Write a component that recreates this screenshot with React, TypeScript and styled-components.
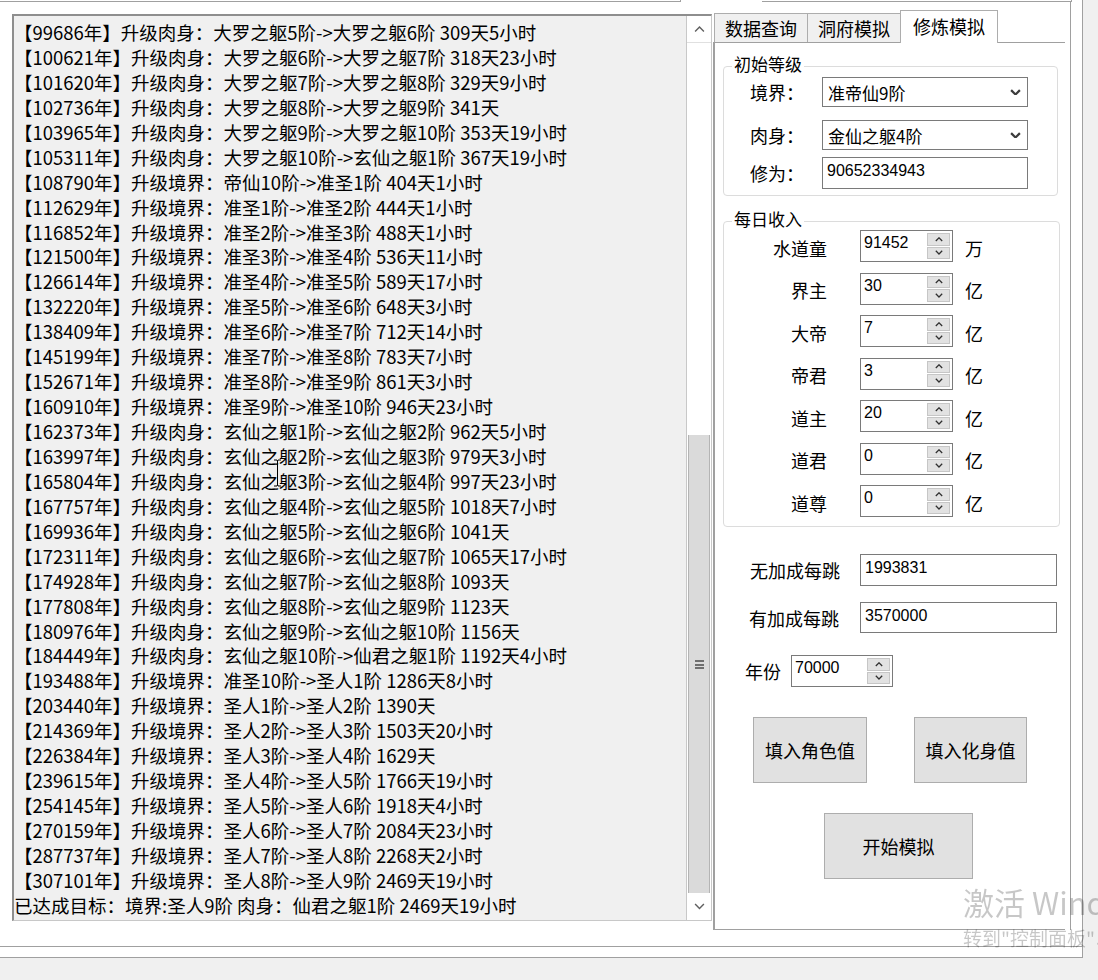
import React from 'react'
import styled, { createGlobalStyle } from 'styled-components'

const Global = createGlobalStyle`
    body {
        margin: 0;
        background: #f0f0f0;
        font-family: "Noto Sans CJK SC", "Noto Sans", sans-serif;
        color: #000;
        overflow: hidden;
    }
    * { box-sizing: border-box; }
`

const Frame = styled.div`
    width: 1083px;
    height: 958px;
    background: #fff;
    border-right: 1px solid #a0a0a0;
    border-bottom: 1px solid #a0a0a0;
`

const Inner = styled.div`
    height: 947px;
    border-bottom: 1px solid #a0a0a0;
`

const TopStrip = styled.div`
    display: flex;
    height: 2px;
`

const Edge = styled.div<{ $w: number; $line?: boolean }>`
    width: ${p => p.$w}px;
    border-bottom: ${p => (p.$line ? '1px solid #a0a0a0' : 'none')};
    border-right: ${p => (p.$line ? '1px solid #a0a0a0' : 'none')};
`

const Body = styled.div`
    display: flex;
    align-items: flex-start;
`

const ListBox = styled.div`
    margin: 12px 0 0 12px;
    width: 700px;
    height: 907px;
    display: flex;
    background: #f0f0f0;
    border-top: 2px solid #8e8e8e;
    border-left: 2px solid #8e8e8e;
    border-right: 1px solid #c8c8c8;
    border-bottom: 1px solid #c8c8c8;
`

const Lines = styled.div`
    flex: 1;
    padding: 4px 0 0 0;
    font-size: 18.5px;
    line-height: 24.94px;
    white-space: nowrap;
    overflow: hidden;
`

const ScrollBar = styled.div`
    width: 25px;
    display: flex;
    flex-direction: column;
    background: #fff;
    border-left: 1px solid #c8c8c8;
`

const ArrowBtn = styled.div<{ $h: number }>`
    height: ${p => p.$h}px;
    display: flex;
    align-items: center;
    justify-content: center;
`

const Track = styled.div`
    height: 393px;
    border-top: 1px solid #e0e0e0;
`

const Thumb = styled.div`
    height: 458px;
    margin: 0 1px;
    background: #dadada;
    border-left: 1px solid #b4b4b4;
    border-right: 1px solid #b4b4b4;
    display: flex;
    align-items: center;
    justify-content: center;
`

const Grip = styled.div`
    width: 9px;
    height: 9px;
    background: linear-gradient(#6e6e6e 0 2px, transparent 2px 4px, #6e6e6e 4px 6px, transparent 6px 7px, #6e6e6e 7px 9px);
`

const TabControl = styled.div`
    margin-left: 1px;
    padding-top: 8px;
    width: 358px;
    border-right: 1px solid #a0a0a0;
`

const TabStrip = styled.div`
    display: flex;
    align-items: flex-end;
    height: 32px;
    padding-left: 2px;
`

const Tab = styled.div<{ $active?: boolean }>`
    height: ${p => (p.$active ? 33 : 29)}px;
    margin-bottom: ${p => (p.$active ? -1 : 0)}px;
    padding: ${p => (p.$active ? '0 12px 3px' : '0 10px')};
    display: flex;
    align-items: center;
    font-size: 18px;
    background: ${p => (p.$active ? '#fff' : '#f0f0f0')};
    border: 1px solid #adadad;
    border-bottom: none;
    margin-left: -1px;
    position: relative;
    z-index: ${p => (p.$active ? 1 : 0)};
`

const Panel = styled.div`
    height: 888px;
    margin-right: 5px;
    background: #fff;
    border-top: 1px solid #a0a0a0;
    border-bottom: 1px solid #a0a0a0;
    border-left: 2px solid #a0a0a0;
    display: flex;
    flex-direction: column;
`

const Group = styled.fieldset<{ $w: number; $mt: number; $pb: number }>`
    margin: ${p => p.$mt}px 0 0 8px;
    width: ${p => p.$w}px;
    padding: 0 0 ${p => p.$pb}px 0;
    border: 1px solid #dcdcdc;
    border-radius: 4px;
    min-width: 0;
`

const Legend = styled.legend`
    margin-left: 8px;
    padding: 0 2px;
    font-size: 17px;
    line-height: 20px;
    position: relative;
    top: -2px;
`

const FieldRow = styled.div<{ $mt: number }>`
    display: flex;
    align-items: center;
    margin-top: ${p => p.$mt}px;
    padding-left: 26px;
`

const FieldLabel = styled.div`
    width: 72px;
    font-size: 18px;
`

const Combo = styled.div`
    width: 206px;
    height: 30px;
    border: 1px solid #7a7a7a;
    display: flex;
    align-items: center;
    justify-content: space-between;
    padding: 0 6px 0 5px;
    font-size: 17px;
`

const TextBox = styled.div<{ $w: number; $h: number }>`
    width: ${p => p.$w}px;
    height: ${p => p.$h}px;
    border: 1px solid #7a7a7a;
    padding: 3px 4px;
    font-family: "Liberation Sans", Arial, sans-serif;
    font-size: 16px;
    line-height: 20px;
`

const IncomeRows = styled.div`
    display: flex;
    flex-direction: column;
    gap: 10.5px;
    margin-top: -1px;
`

const IncomeRow = styled.div`
    display: flex;
    align-items: center;
    height: 32px;
`

const IncomeLabel = styled.div`
    width: 103px;
    margin-right: 33px;
    text-align: right;
    font-size: 18px;
    padding-top: 3px;
`

const Spin = styled.div<{ $w: number }>`
    width: ${p => p.$w}px;
    height: 32px;
    border: 1px solid #7a7a7a;
    display: flex;
`

const SpinText = styled.div`
    flex: 1;
    padding: 2px 3px;
    font-family: "Liberation Sans", Arial, sans-serif;
    font-size: 16px;
    line-height: 20px;
`

const SpinBtns = styled.div`
    width: 23px;
    margin: 2px 2px 2px 0;
    display: flex;
    flex-direction: column;
    gap: 1px;
`

const SpinBtn = styled.div`
    flex: 1;
    background: #e2e2e2;
    border: 1px solid #c6c6c6;
    display: flex;
    align-items: center;
    justify-content: center;
`

const Unit = styled.div`
    margin-left: 12px;
    font-size: 18px;
    padding-top: 3px;
`

const LineRow = styled.div<{ $mt: number; $pl: number }>`
    display: flex;
    align-items: center;
    margin-top: ${p => p.$mt}px;
    padding-left: ${p => p.$pl}px;
`

const LineLabel = styled.div<{ $w: number }>`
    width: ${p => p.$w}px;
    font-size: 18px;
`

const ButtonRow = styled.div<{ $mt: number; $pl: number }>`
    display: flex;
    gap: 47px;
    margin-top: ${p => p.$mt}px;
    padding-left: ${p => p.$pl}px;
`

const Button = styled.div<{ $w: number }>`
    width: ${p => p.$w}px;
    height: 66px;
    background: #e1e1e1;
    border: 1px solid #adadad;
    display: flex;
    align-items: center;
    justify-content: center;
    font-size: 18px;
`

const Watermark = styled.div`
    position: fixed;
    left: 963px;
    top: 882px;
    color: rgba(0, 0, 0, 0.22);
    white-space: nowrap;
    pointer-events: none;
`

const WmBig = styled.div`
    font-size: 31px;
    line-height: 40px;
`

const WmSmall = styled.div`
    font-size: 19px;
    line-height: 26px;
    margin-top: 3px;
`

const Cursor = styled.svg`
    position: fixed;
    left: 273px;
    top: 459px;
    pointer-events: none;
`

const Chevron = ({ up, w = 10, c = '#3c3c3c', sw = 1.6 }: { up?: boolean; w?: number; c?: string; sw?: number }) => (
    <svg width={w} height={w * 0.6} viewBox="0 0 10 6">
        <polyline
            points={up ? '1,5 5,1 9,5' : '1,1 5,5 9,1'}
            fill="none"
            stroke={c}
            strokeWidth={sw}
        />
    </svg>
)

const rows = [
    '【99686年】升级肉身：大罗之躯5阶->大罗之躯6阶 309天5小时',
    '【100621年】升级肉身：大罗之躯6阶->大罗之躯7阶 318天23小时',
    '【101620年】升级肉身：大罗之躯7阶->大罗之躯8阶 329天9小时',
    '【102736年】升级肉身：大罗之躯8阶->大罗之躯9阶 341天',
    '【103965年】升级肉身：大罗之躯9阶->大罗之躯10阶 353天19小时',
    '【105311年】升级肉身：大罗之躯10阶->玄仙之躯1阶 367天19小时',
    '【108790年】升级境界：帝仙10阶->准圣1阶 404天1小时',
    '【112629年】升级境界：准圣1阶->准圣2阶 444天1小时',
    '【116852年】升级境界：准圣2阶->准圣3阶 488天1小时',
    '【121500年】升级境界：准圣3阶->准圣4阶 536天11小时',
    '【126614年】升级境界：准圣4阶->准圣5阶 589天17小时',
    '【132220年】升级境界：准圣5阶->准圣6阶 648天3小时',
    '【138409年】升级境界：准圣6阶->准圣7阶 712天14小时',
    '【145199年】升级境界：准圣7阶->准圣8阶 783天7小时',
    '【152671年】升级境界：准圣8阶->准圣9阶 861天3小时',
    '【160910年】升级境界：准圣9阶->准圣10阶 946天23小时',
    '【162373年】升级肉身：玄仙之躯1阶->玄仙之躯2阶 962天5小时',
    '【163997年】升级肉身：玄仙之躯2阶->玄仙之躯3阶 979天3小时',
    '【165804年】升级肉身：玄仙之躯3阶->玄仙之躯4阶 997天23小时',
    '【167757年】升级肉身：玄仙之躯4阶->玄仙之躯5阶 1018天7小时',
    '【169936年】升级肉身：玄仙之躯5阶->玄仙之躯6阶 1041天',
    '【172311年】升级肉身：玄仙之躯6阶->玄仙之躯7阶 1065天17小时',
    '【174928年】升级肉身：玄仙之躯7阶->玄仙之躯8阶 1093天',
    '【177808年】升级肉身：玄仙之躯8阶->玄仙之躯9阶 1123天',
    '【180976年】升级肉身：玄仙之躯9阶->玄仙之躯10阶 1156天',
    '【184449年】升级肉身：玄仙之躯10阶->仙君之躯1阶 1192天4小时',
    '【193488年】升级境界：准圣10阶->圣人1阶 1286天8小时',
    '【203440年】升级境界：圣人1阶->圣人2阶 1390天',
    '【214369年】升级境界：圣人2阶->圣人3阶 1503天20小时',
    '【226384年】升级境界：圣人3阶->圣人4阶 1629天',
    '【239615年】升级境界：圣人4阶->圣人5阶 1766天19小时',
    '【254145年】升级境界：圣人5阶->圣人6阶 1918天4小时',
    '【270159年】升级境界：圣人6阶->圣人7阶 2084天23小时',
    '【287737年】升级境界：圣人7阶->圣人8阶 2268天2小时',
    '【307101年】升级境界：圣人8阶->圣人9阶 2469天19小时',
    '已达成目标：境界:圣人9阶 肉身：仙君之躯1阶 2469天19小时',
]

const income = [
    { label: '水道童', value: '91452', unit: '万' },
    { label: '界主', value: '30', unit: '亿' },
    { label: '大帝', value: '7', unit: '亿' },
    { label: '帝君', value: '3', unit: '亿' },
    { label: '道主', value: '20', unit: '亿' },
    { label: '道君', value: '0', unit: '亿' },
    { label: '道尊', value: '0', unit: '亿' },
]

const SpinBox = ({ value, w }: { value: string; w: number }) => (
    <Spin $w={w}>
        <SpinText>{value}</SpinText>
        <SpinBtns>
            <SpinBtn><Chevron up w={8} sw={1.6} c="#303030" /></SpinBtn>
            <SpinBtn><Chevron w={8} sw={1.6} c="#303030" /></SpinBtn>
        </SpinBtns>
    </Spin>
)

export default function App() {
    return (
        <>
            <Global />
            <Frame>
                <Inner>
                    <TopStrip>
                        <Edge $w={681} $line />
                        <Edge $w={81} />
                        <Edge $w={310} $line />
                    </TopStrip>
                    <Body>
                        <ListBox>
                            <Lines>
                                {rows.map(r => (
                                    <div key={r}>{r}</div>
                                ))}
                            </Lines>
                            <ScrollBar>
                                <ArrowBtn $h={26}><Chevron up w={11} c="#606060" sw={1.3} /></ArrowBtn>
                                <Track />
                                <Thumb><Grip /></Thumb>
                                <ArrowBtn $h={27}><Chevron w={11} c="#606060" sw={1.3} /></ArrowBtn>
                            </ScrollBar>
                        </ListBox>
                        <TabControl>
                            <TabStrip>
                                <Tab>数据查询</Tab>
                                <Tab>洞府模拟</Tab>
                                <Tab $active>修炼模拟</Tab>
                            </TabStrip>
                            <Panel>
                                <Group $w={335} $mt={13} $pb={6}>
                                    <Legend>初始等级</Legend>
                                    <FieldRow $mt={1}>
                                        <FieldLabel>境界：</FieldLabel>
                                        <Combo>准帝仙9阶<Chevron w={11} sw={2} /></Combo>
                                    </FieldRow>
                                    <FieldRow $mt={13}>
                                        <FieldLabel>肉身：</FieldLabel>
                                        <Combo>金仙之躯4阶<Chevron w={11} sw={2} /></Combo>
                                    </FieldRow>
                                    <FieldRow $mt={7}>
                                        <FieldLabel>修为：</FieldLabel>
                                        <TextBox $w={206} $h={32}>90652334943</TextBox>
                                    </FieldRow>
                                </Group>
                                <Group $w={337} $mt={15} $pb={9}>
                                    <Legend>每日收入</Legend>
                                    <IncomeRows>
                                        {income.map(i => (
                                            <IncomeRow key={i.label}>
                                                <IncomeLabel>{i.label}</IncomeLabel>
                                                <SpinBox value={i.value} w={93} />
                                                <Unit>{i.unit}</Unit>
                                            </IncomeRow>
                                        ))}
                                    </IncomeRows>
                                </Group>
                                <LineRow $mt={27} $pl={35}>
                                    <LineLabel $w={110}>无加成每跳</LineLabel>
                                    <TextBox $w={197} $h={32}>1993831</TextBox>
                                </LineRow>
                                <LineRow $mt={16} $pl={34}>
                                    <LineLabel $w={111}>有加成每跳</LineLabel>
                                    <TextBox $w={197} $h={31}>3570000</TextBox>
                                </LineRow>
                                <LineRow $mt={22} $pl={30}>
                                    <LineLabel $w={46}>年份</LineLabel>
                                    <SpinBox value="70000" w={102} />
                                </LineRow>
                                <ButtonRow $mt={30} $pl={38}>
                                    <Button $w={114}>填入角色值</Button>
                                    <Button $w={113}>填入化身值</Button>
                                </ButtonRow>
                                <ButtonRow $mt={30} $pl={109}>
                                    <Button $w={149}>开始模拟</Button>
                                </ButtonRow>
                            </Panel>
                        </TabControl>
                    </Body>
                </Inner>
            </Frame>
            <Cursor width="9" height="28" viewBox="0 0 9 28">
                <path d="M1 1h3l0.5 1 0.5-1h3M4.5 2v24M1 27h3l0.5-1 0.5 1h3" fill="none" stroke="#000" strokeWidth="1" />
            </Cursor>
            <Watermark>
                <WmBig>激活 Windows</WmBig>
                <WmSmall>转到"控制面板"以激活 Windows。</WmSmall>
            </Watermark>
        </>
    )
}
